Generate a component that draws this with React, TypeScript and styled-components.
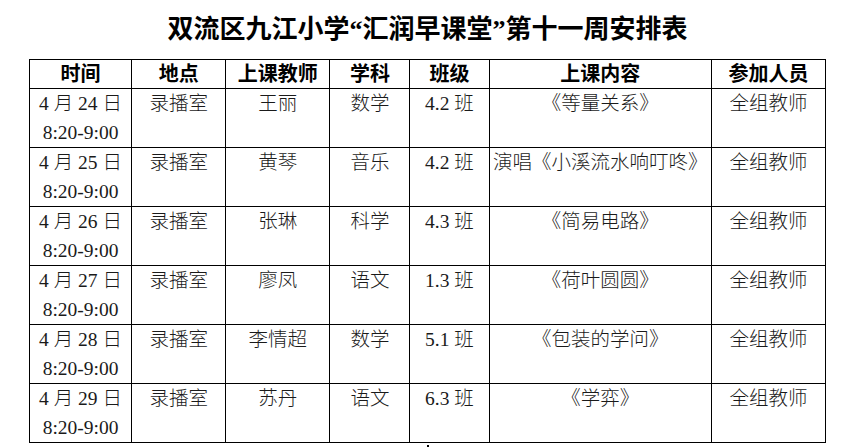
import styled, { createGlobalStyle } from "styled-components";

interface Lesson {
  date: string;
  place: string;
  teacher: string;
  subject: string;
  grade: string;
  content: string;
  members: string;
}

const lessons: Lesson[] = [
  { date: "4 月 24 日", place: "录播室", teacher: "王丽", subject: "数学", grade: "4.2 班", content: "《等量关系》", members: "全组教师" },
  { date: "4 月 25 日", place: "录播室", teacher: "黄琴", subject: "音乐", grade: "4.2 班", content: "演唱《小溪流水响叮咚》", members: "全组教师" },
  { date: "4 月 26 日", place: "录播室", teacher: "张琳", subject: "科学", grade: "4.3 班", content: "《简易电路》", members: "全组教师" },
  { date: "4 月 27 日", place: "录播室", teacher: "廖凤", subject: "语文", grade: "1.3 班", content: "《荷叶圆圆》", members: "全组教师" },
  { date: "4 月 28 日", place: "录播室", teacher: "李情超", subject: "数学", grade: "5.1 班", content: "《包装的学问》", members: "全组教师" },
  { date: "4 月 29 日", place: "录播室", teacher: "苏丹", subject: "语文", grade: "6.3 班", content: "《学弈》", members: "全组教师" },
];

const headers = ["时间", "地点", "上课教师", "学科", "班级", "上课内容", "参加人员"];
const widths = [102, 94, 104, 80, 79, 222, 114];

const App = () => {
  return (
    <>
      <GlobalStyle />
      <Page>
        <Title>双流区九江小学“汇润早课堂”第十一周安排表</Title>
        <Schedule>
          <colgroup>
            {widths.map((w, i) => (
              <col key={i} style={{ width: w }} />
            ))}
          </colgroup>
          <thead>
            <tr>
              {headers.map((h) => (
                <HeadCell key={h}>{h}</HeadCell>
              ))}
            </tr>
          </thead>
          <tbody>
            {lessons.map((l) => (
              <tr key={l.date}>
                <Cell>
                  {l.date}
                  <br />
                  8:20-9:00
                </Cell>
                <Cell>{l.place}</Cell>
                <Cell>{l.teacher}</Cell>
                <Cell>{l.subject}</Cell>
                <Cell>{l.grade}</Cell>
                <Cell>{l.content}</Cell>
                <Cell>{l.members}</Cell>
              </tr>
            ))}
          </tbody>
        </Schedule>
        <Footnote />
      </Page>
    </>
  );
};

export default App;

const GlobalStyle = createGlobalStyle`
  body {
    margin: 0;
    background: #fff;
    font-family: "Liberation Serif", "Noto Sans CJK SC", serif;
    color: #111;
  }
`;

const Page = styled.div`
  width: 850px;
  height: 448px;
  overflow: hidden;
  padding-left: 29px;
  box-sizing: border-box;
`;

const Title = styled.h1`
  margin: 0;
  width: 797px;
  height: 59px;
  line-height: 59px;
  text-align: center;
  font-size: 26px;
  font-weight: 700;
  color: #000;
`;

const Schedule = styled.table`
  border-collapse: collapse;
  table-layout: fixed;
  width: 797px;
`;

const HeadCell = styled.th`
  border: 1px solid #000;
  padding: 0;
  height: 28px;
  line-height: 28px;
  font-size: 20px;
  font-weight: 700;
  text-align: center;
  color: #000;
`;

const Cell = styled.td`
  border: 1px solid #000;
  padding: 0;
  height: 58px;
  line-height: 29px;
  font-size: 19.5px;
  font-weight: 300;
  text-align: center;
  vertical-align: top;
  white-space: nowrap;
  color: #1a1a1a;
`;

const Footnote = styled.div`
  width: 2px;
  height: 2px;
  margin: 2px 0 0 398px;
  background: #000;
`;
